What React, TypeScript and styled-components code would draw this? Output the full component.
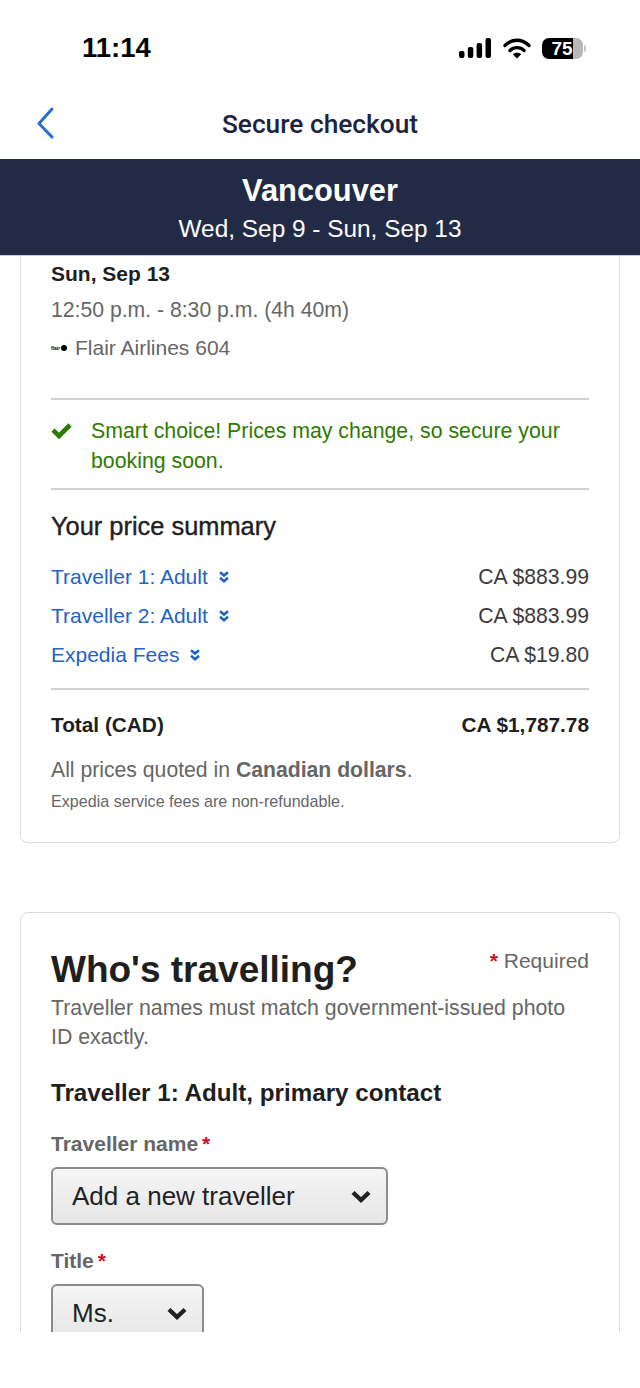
import React from 'react';
import styled, { createGlobalStyle } from 'styled-components';

const GlobalStyle = createGlobalStyle`
  html, body {
    margin: 0;
    padding: 0;
    background: #fff;
  }
  * {
    box-sizing: border-box;
  }
`;

const priceRows = [
  { label: 'Traveller 1: Adult', price: 'CA $883.99' },
  { label: 'Traveller 2: Adult', price: 'CA $883.99' },
  { label: 'Expedia Fees', price: 'CA $19.80' },
];

const SignalIcon = () => (
  <svg width="32" height="20" viewBox="0 0 32 20">
    <rect x="0" y="13" width="5.5" height="7" rx="2" fill="#000" />
    <rect x="8.8" y="9" width="5.5" height="11" rx="2" fill="#000" />
    <rect x="17.6" y="5" width="5.5" height="15" rx="2" fill="#000" />
    <rect x="26.5" y="0" width="5.5" height="20" rx="2" fill="#000" />
  </svg>
);

const WifiIcon = () => (
  <svg width="28" height="22" viewBox="0 0 28 22" fill="none">
    <path d="M2 8.5C9 1.5 19 1.5 26 8.5" stroke="#000" strokeWidth="3.4" strokeLinecap="round" />
    <path d="M7 13.5C11 9.7 17 9.7 21 13.5" stroke="#000" strokeWidth="3.4" strokeLinecap="round" />
    <path d="M14 21.5L9.8 17.2C12 15.2 16 15.2 18.2 17.2Z" fill="#000" />
  </svg>
);

const BackIcon = () => (
  <svg width="20" height="32" viewBox="0 0 20 32" fill="none">
    <path d="M16 2L3 16.5L16 30" stroke="#2a6ccf" strokeWidth="3" strokeLinecap="round" strokeLinejoin="round" />
  </svg>
);

const CheckIcon = () => (
  <svg width="21" height="17" viewBox="0 0 21 17" fill="none">
    <path d="M2 8.2L8 14L19 3" stroke="#2f7a00" strokeWidth="4.6" />
  </svg>
);

const DoubleChevron = () => (
  <svg width="10" height="12" viewBox="0 0 10 12" fill="none">
    <path d="M1 1.2L5 4.6L9 1.2" stroke="#1f63c4" strokeWidth="2.6" />
    <path d="M1 6.8L5 10.2L9 6.8" stroke="#1f63c4" strokeWidth="2.6" />
  </svg>
);

const SelectChevron = () => (
  <svg width="20" height="13" viewBox="0 0 20 13" fill="none">
    <path d="M2 2.5L10 10L18 2.5" stroke="#222" strokeWidth="4.4" />
  </svg>
);

const App = () => (
  <>
    <GlobalStyle />
    <Page>
      <StatusBar>
        <Clock>11:14</Clock>
        <StatusIcons>
          <SignalIcon />
          <WifiIcon />
          <Battery>
            <BatteryLevel>75</BatteryLevel>
            <BatteryCap />
          </Battery>
        </StatusIcons>
      </StatusBar>
      <NavBar>
        <BackButton>
          <BackIcon />
        </BackButton>
        <NavTitle>Secure checkout</NavTitle>
      </NavBar>
      <Banner>
        <BannerCity>Vancouver</BannerCity>
        <BannerDates>Wed, Sep 9 - Sun, Sep 13</BannerDates>
      </Banner>
      <Scroller>
        <SummaryCard>
          <FlightDate>Sun, Sep 13</FlightDate>
          <FlightTime>12:50 p.m. - 8:30 p.m. (4h 40m)</FlightTime>
          <Airline>
            <AirlineLogo>
              <LogoWord>flair</LogoWord>
              <LogoDot />
            </AirlineLogo>
            Flair Airlines 604
          </Airline>
          <Notice>
            <NoticeIcon>
              <CheckIcon />
            </NoticeIcon>
            <NoticeText>Smart choice! Prices may change, so secure your booking soon.</NoticeText>
          </Notice>
          <SummaryTitle>Your price summary</SummaryTitle>
          <PriceList>
            {priceRows.map((row) => (
              <PriceRow key={row.label}>
                <PriceLabel>
                  {row.label}
                  <DoubleChevron />
                </PriceLabel>
                <Price>{row.price}</Price>
              </PriceRow>
            ))}
          </PriceList>
          <TotalRow>
            <span>Total (CAD)</span>
            <span>CA $1,787.78</span>
          </TotalRow>
          <QuoteNote>
            All prices quoted in <strong>Canadian dollars</strong>.
          </QuoteNote>
          <FeeNote>Expedia service fees are non-refundable.</FeeNote>
        </SummaryCard>
        <TravellerCard>
          <CardHeader>
            <CardTitle>Who's travelling?</CardTitle>
            <RequiredNote>
              <Star>*</Star> Required
            </RequiredNote>
          </CardHeader>
          <CardIntro>Traveller names must match government-issued photo ID exactly.</CardIntro>
          <TravellerHeading>Traveller 1: Adult, primary contact</TravellerHeading>
          <FieldLabel>
            Traveller name<LabelStar>*</LabelStar>
          </FieldLabel>
          <SelectBox $width={337}>
            <span>Add a new traveller</span>
            <SelectChevron />
          </SelectBox>
          <FieldLabel>
            Title<LabelStar>*</LabelStar>
          </FieldLabel>
          <SelectBox $width={153}>
            <span>Ms.</span>
            <SelectChevron />
          </SelectBox>
        </TravellerCard>
      </Scroller>
    </Page>
  </>
);

export default App;

const Page = styled.div`
  width: 640px;
  height: 1388px;
  overflow: hidden;
  background: #fff;
  font-family: 'Liberation Sans', Arial, sans-serif;
  color: #1f1f1f;
`;

const StatusBar = styled.div`
  height: 94px;
  padding: 31px 54px 0 82px;
  display: flex;
  justify-content: space-between;
  align-items: flex-start;
`;

const Clock = styled.div`
  font-size: 27.5px;
  line-height: 33px;
  font-weight: 700;
  color: #000;
`;

const StatusIcons = styled.div`
  display: flex;
  align-items: center;
  gap: 12px;
  margin-top: 6px;
`;

const Battery = styled.div`
  display: flex;
  align-items: center;
  margin-left: -1px;
`;

const BatteryLevel = styled.div`
  width: 41px;
  height: 21px;
  border-radius: 7px;
  background: linear-gradient(to right, #000 0, #000 75%, #b8b8b8 75%, #b8b8b8 100%);
  color: #fff;
  font-size: 19px;
  line-height: 21px;
  font-weight: 700;
  text-align: center;
  padding-right: 1px;
`;

const BatteryCap = styled.div`
  width: 2px;
  height: 7px;
  margin-left: 1px;
  border-radius: 0 2px 2px 0;
  background: #c4c4c4;
`;

const NavBar = styled.div`
  position: relative;
  height: 65px;
  display: flex;
  align-items: center;
  justify-content: center;
`;

const BackButton = styled.div`
  position: absolute;
  left: 36px;
  top: 13px;
  display: flex;
`;

const NavTitle = styled.div`
  font-family: Roboto, 'Liberation Sans', sans-serif;
  font-size: 26.3px;
  font-weight: 500;
  color: #1d2340;
  margin-top: -5px;
`;

const Banner = styled.div`
  height: 97px;
  background: #222b45;
  border-bottom: 1px solid #c5c9dc;
  color: #fff;
  text-align: center;
  padding-top: 14px;
`;

const BannerCity = styled.div`
  font-size: 30.8px;
  line-height: 36px;
  font-weight: 700;
`;

const BannerDates = styled.div`
  font-size: 24.4px;
  line-height: 30px;
  margin-top: 5px;
`;

const Scroller = styled.div`
  height: 1076px;
  overflow: hidden;
  padding: 0 20px;
`;

const SummaryCard = styled.div`
  height: 587px;
  border: 1px solid #dcdcdc;
  border-top: none;
  border-radius: 0 0 8px 8px;
  padding: 4px 30px 0;
`;

const FlightDate = styled.div`
  font-size: 21px;
  line-height: 27px;
  font-weight: 700;
`;

const FlightTime = styled.div`
  font-size: 21.2px;
  line-height: 27px;
  color: #666;
  margin-top: 9px;
`;

const Airline = styled.div`
  display: flex;
  align-items: center;
  gap: 5px;
  font-size: 21px;
  line-height: 27px;
  color: #666;
  margin-top: 11px;
`;

const AirlineLogo = styled.div`
  display: flex;
  align-items: center;
  gap: 1px;
  width: 19px;
`;

const LogoWord = styled.span`
  font-size: 5px;
  line-height: 6px;
  font-weight: 700;
  color: #000;
`;

const LogoDot = styled.span`
  width: 6px;
  height: 6px;
  border-radius: 50%;
  background: #000;
`;

const Notice = styled.div`
  display: flex;
  margin-top: 37px;
  padding: 16px 0 12px;
  border-top: 2px solid #d0d0d0;
  border-bottom: 2px solid #d0d0d0;
`;

const NoticeIcon = styled.div`
  width: 40px;
  flex: none;
  padding-top: 6px;
`;

const NoticeText = styled.div`
  font-size: 21.3px;
  line-height: 30px;
  color: #2f7a00;
`;

const SummaryTitle = styled.div`
  font-size: 25.4px;
  line-height: 30px;
  font-weight: 400;
  -webkit-text-stroke: 0.4px #1f1f1f;
  margin-top: 21px;
`;

const PriceList = styled.div`
  display: flex;
  flex-direction: column;
  gap: 12px;
  margin-top: 22px;
`;

const PriceRow = styled.div`
  display: flex;
  justify-content: space-between;
  align-items: center;
  height: 27px;
  font-size: 21.2px;
`;

const PriceLabel = styled.div`
  display: flex;
  align-items: center;
  gap: 11px;
  font-size: 21px;
  color: #1f63c4;
`;

const Price = styled.div`
  color: #3a3a3a;
`;

const TotalRow = styled.div`
  display: flex;
  justify-content: space-between;
  margin-top: 20px;
  padding-top: 21px;
  border-top: 2px solid #d0d0d0;
  font-size: 20.8px;
  line-height: 27px;
  font-weight: 700;
`;

const QuoteNote = styled.div`
  font-size: 21.2px;
  line-height: 27px;
  color: #666;
  margin-top: 18px;

  strong {
    font-weight: 700;
  }
`;

const FeeNote = styled.div`
  font-size: 16.1px;
  line-height: 20px;
  color: #666;
  margin-top: 8px;
`;

const TravellerCard = styled.div`
  margin-top: 69px;
  height: 600px;
  border: 1px solid #dcdcdc;
  border-radius: 8px;
  padding: 34px 30px 0;
`;

const CardHeader = styled.div`
  display: flex;
  justify-content: space-between;
  align-items: flex-start;
`;

const CardTitle = styled.div`
  font-size: 37px;
  line-height: 46px;
  font-weight: 700;
`;

const RequiredNote = styled.div`
  font-size: 21px;
  line-height: 27px;
  color: #666;
`;

const Star = styled.span`
  color: #c8102e;
  font-weight: 700;
`;

const CardIntro = styled.div`
  font-size: 21.3px;
  line-height: 29px;
  color: #666;
  margin-top: 1px;
`;

const TravellerHeading = styled.div`
  font-size: 24.2px;
  line-height: 30px;
  font-weight: 700;
  margin-top: 26px;
`;

const FieldLabel = styled.div`
  font-size: 21px;
  line-height: 27px;
  font-weight: 700;
  color: #666;
  margin-top: 22px;
`;

const LabelStar = styled.span`
  color: #c8102e;
  margin-left: 4px;
`;

const SelectBox = styled.div<{ $width: number }>`
  width: ${(p) => p.$width}px;
  height: 58px;
  margin-top: 10px;
  padding: 0 15px 0 19px;
  display: flex;
  justify-content: space-between;
  align-items: center;
  border: 2px solid #8c8c8c;
  border-radius: 6px;
  background: linear-gradient(to bottom, #f5f5f5, #e6e6e6);
  font-size: 26px;
  color: #222;
`;
